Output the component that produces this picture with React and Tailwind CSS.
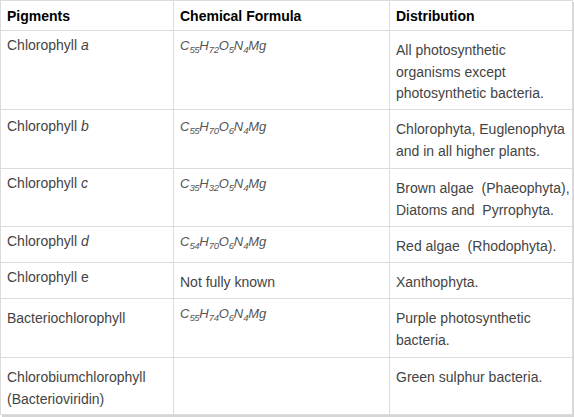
import React from 'react';

// Table of chlorophyll pigments, formulas and where they occur.
// top: 'a' = text sits close to the top, 'b' = text pushed down a little more.

function Formula({ parts }) {
    return (
        <span className="italic text-[13px] text-[#555] whitespace-nowrap">
            {parts.map(([el, n], i) => (
                <React.Fragment key={i}>
                    {el}
                    {n && <span className="relative top-[3px] text-[9.5px] leading-none tracking-[-0.3px]">{n}</span>}
                </React.Fragment>
            ))}
        </span>
    );
}

const rows = [
    {
        h: 'h-[79px]',
        cells: [
            { top: 'a', content: <>Chlorophyll <i>a</i></> },
            { top: 'a', content: <Formula parts={[['C', '55'], ['H', '72'], ['O', '5'], ['N', '4'], ['Mg']]} /> },
            { top: 'b', content: <>All photosynthetic<br />organisms except<br />photosynthetic bacteria.</> }
        ]
    },
    {
        h: 'h-[59px]',
        cells: [
            { top: 'a2', content: <>Chlorophyll <i>b</i></> },
            { top: 'a2', content: <Formula parts={[['C', '55'], ['H', '70'], ['O', '6'], ['N', '4'], ['Mg']]} /> },
            { top: 'b', content: <>Chlorophyta, Euglenophyta<br />and in all higher plants.</> }
        ]
    },
    {
        h: 'h-[58px]',
        cells: [
            { top: 'a', content: <>Chlorophyll <i>c</i></> },
            { top: 'a', content: <Formula parts={[['C', '35'], ['H', '32'], ['O', '5'], ['N', '4'], ['Mg']]} /> },
            { top: 'b', content: <>Brown algae&nbsp; (Phaeophyta),<br />Diatoms and&nbsp; Pyrrophyta.</> }
        ]
    },
    {
        h: 'h-[36px]',
        cells: [
            { top: 'a', content: <>Chlorophyll <i>d</i></> },
            { top: 'a', content: <Formula parts={[['C', '54'], ['H', '70'], ['O', '6'], ['N', '4'], ['Mg']]} /> },
            { top: 'b', content: <>Red algae&nbsp; (Rhodophyta).</> }
        ]
    },
    {
        h: 'h-[36px]',
        cells: [
            { top: 'a', content: <>Chlorophyll e</> },
            { top: 'b', content: <>Not fully known</> },
            { top: 'b', content: <>Xanthophyta.</> }
        ]
    },
    {
        h: 'h-[59px]',
        cells: [
            { top: 'b', content: <>Bacteriochlorophyll</> },
            { top: 'a', content: <Formula parts={[['C', '55'], ['H', '74'], ['O', '6'], ['N', '4'], ['Mg']]} /> },
            { top: 'b', content: <>Purple photosynthetic<br />bacteria.</> }
        ]
    },
    {
        h: 'h-[57px]',
        cells: [
            { top: 'b', content: <>Chlorobiumchlorophyll<br />(Bacterioviridin)</> },
            { top: 'b', content: null },
            { top: 'b', content: <>Green sulphur bacteria.</> }
        ]
    }
];

const padTop = {
    a: 'pt-[4px]',
    a2: 'pt-[6px]',
    b: 'pt-[9px]'
};

export default function App() {
    return (
        <div className="bg-white w-[574px] h-[417px] font-['Liberation_Sans',Arial,sans-serif]">
            <table className="border-collapse table-fixed w-[572px] shadow-[2px_2px_0_#d6d6d6]">
                <colgroup>
                    <col className="w-[173px]" />
                    <col className="w-[216px]" />
                    <col className="w-[183px]" />
                </colgroup>
                <thead>
                    <tr className="h-[30px]">
                        {['Pigments', 'Chemical Formula', 'Distribution'].map((t) => (
                            <th
                                key={t}
                                className="border border-[#dcdcdc] text-left align-top pt-[5px] px-[6px] text-[14px] leading-[20px] font-bold text-black"
                            >
                                {t}
                            </th>
                        ))}
                    </tr>
                </thead>
                <tbody>
                    {rows.map((row, r) => (
                        <tr key={r} className={row.h}>
                            {row.cells.map((cell, c) => (
                                <td
                                    key={c}
                                    className={`border border-[#dcdcdc] align-top pl-[6px] pr-0 text-[14px] text-[#444] whitespace-nowrap ${padTop[cell.top]} ${cell.top === 'b' ? 'leading-[21.5px]' : 'leading-[20px]'}`}
                                >
                                    {cell.content}
                                </td>
                            ))}
                        </tr>
                    ))}
                </tbody>
            </table>
        </div>
    );
}
